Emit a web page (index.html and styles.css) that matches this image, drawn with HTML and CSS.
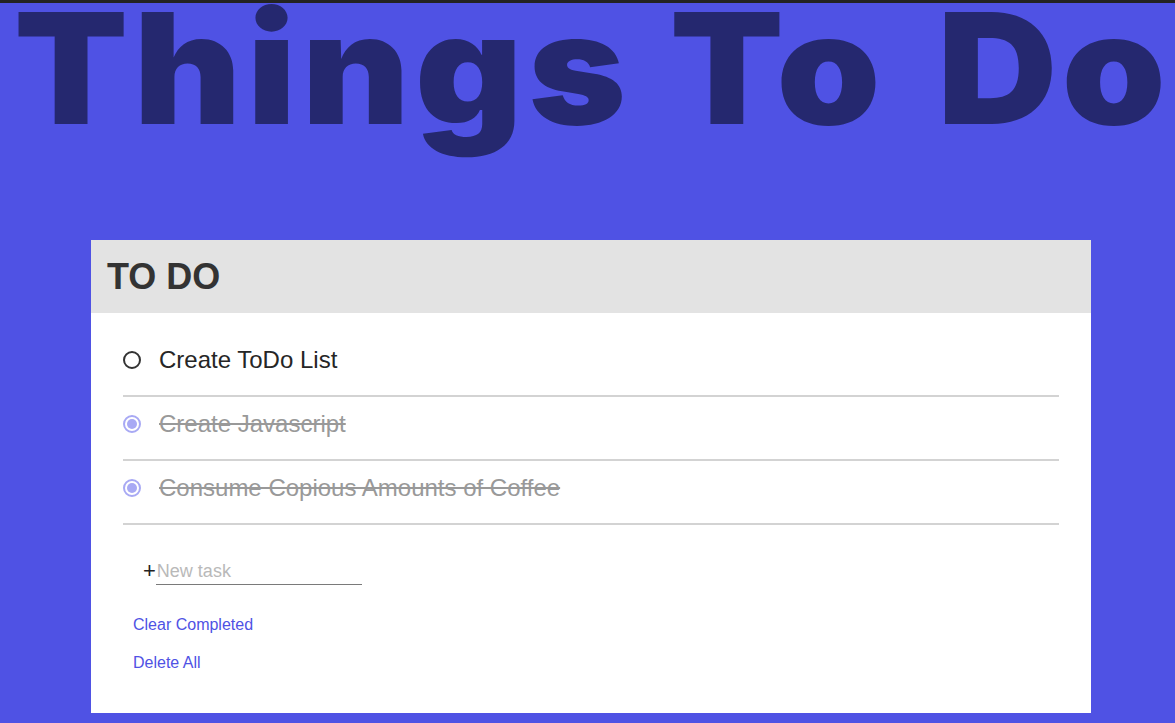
FILE: index.html
```html
<!DOCTYPE html>
<html lang="en">
<head>
<meta charset="utf-8">
<title>Things To Do</title>
<link rel="stylesheet" href="styles.css">
</head>
<body>
  <h1 class="page-title">Things To <span class="title-last">Do</span></h1>
  <section class="card">
    <header class="card-header">
      <h2 class="card-title">TO DO</h2>
    </header>
    <div class="card-body">
      <ul class="tasks">
        <li class="task">
          <span class="check"></span>
          <span class="task-text">Create ToDo List</span>
        </li>
        <li class="task task-done">
          <span class="check check-on"></span>
          <span class="task-text">Create Javascript</span>
        </li>
        <li class="task task-done">
          <span class="check check-on"></span>
          <span class="task-text">Consume Copious Amounts of Coffee</span>
        </li>
      </ul>
      <div class="new-task">
        <span class="plus">+</span>
        <input class="new-input" type="text" placeholder="New task">
      </div>
      <div class="actions">
        <a class="action" href="#">Clear Completed</a>
        <a class="action" href="#">Delete All</a>
      </div>
    </div>
  </section>
</body>
</html>
```
FILE: styles.css
```css
html, body {
  margin: 0;
  padding: 0;
}
body {
  background: #4f52e4;
  border-top: 3px solid #232323;
  font-family: "Liberation Sans", Arial, sans-serif;
  height: 720px;
  overflow: hidden;
}
.page-title {
  margin: 0;
  width: 1075px;
  box-sizing: border-box;
  padding-left: 13px;
  font-family: "Inter", "Liberation Sans", sans-serif;
  font-weight: 900;
  font-size: 154px;
  line-height: 130px;
  height: 132px;
  letter-spacing: 5px;
  color: #25286f;
  white-space: nowrap;
  overflow: visible;
  transform: scaleX(1.08);
  transform-origin: 0 0;
}
.title-last {
  margin-left: 12px;
  letter-spacing: 4px;
}
.card {
  width: 1000px;
  margin: 105px 0 0 91px;
  background: #ffffff;
}
.card-header {
  height: 73px;
  background: #e3e3e3;
  display: flex;
  align-items: center;
  padding: 0 16px;
}
.card-title {
  margin: 0;
  font-size: 36px;
  font-weight: 700;
  color: #333333;
}
.card-body {
  padding: 20px 32px 41px;
}
.tasks {
  list-style: none;
  margin: 0;
  padding: 0;
}
.task {
  display: flex;
  align-items: center;
  padding: 13px 0 21px;
  border-bottom: 2px solid #d3d3d3;
}
.check {
  box-sizing: border-box;
  width: 18px;
  height: 18px;
  border-radius: 50%;
  border: 2px solid #333333;
  margin-right: 18px;
  flex: none;
  position: relative;
}
.check-on {
  border-color: #a8a9f4;
}
.check-on::after {
  content: "";
  position: absolute;
  left: 2px;
  top: 2px;
  width: 10px;
  height: 10px;
  border-radius: 50%;
  background: #a8a9f4;
}
.task-text {
  font-size: 24px;
  color: #262626;
}
.task-done .task-text {
  color: #999999;
  text-decoration: line-through;
}
.new-task {
  display: flex;
  align-items: flex-end;
  margin-top: 34px;
  padding-left: 20px;
}
.plus {
  font-size: 22px;
  line-height: 22px;
  color: #222222;
  padding-bottom: 3px;
}
.new-input {
  width: 206px;
  box-sizing: border-box;
  border: none;
  border-bottom: 1px solid #7a7a7a;
  padding: 2px 0 2px 1px;
  font-family: "Liberation Sans", Arial, sans-serif;
  font-size: 18px;
  color: #333333;
  outline: none;
  background: transparent;
}
.new-input::placeholder {
  color: #b9b9b9;
}
.actions {
  display: flex;
  flex-direction: column;
  align-items: flex-start;
  gap: 20px;
  margin-top: 31px;
  padding-left: 10px;
}
.action {
  font-size: 16px;
  color: #4f52e4;
  text-decoration: none;
}
```
